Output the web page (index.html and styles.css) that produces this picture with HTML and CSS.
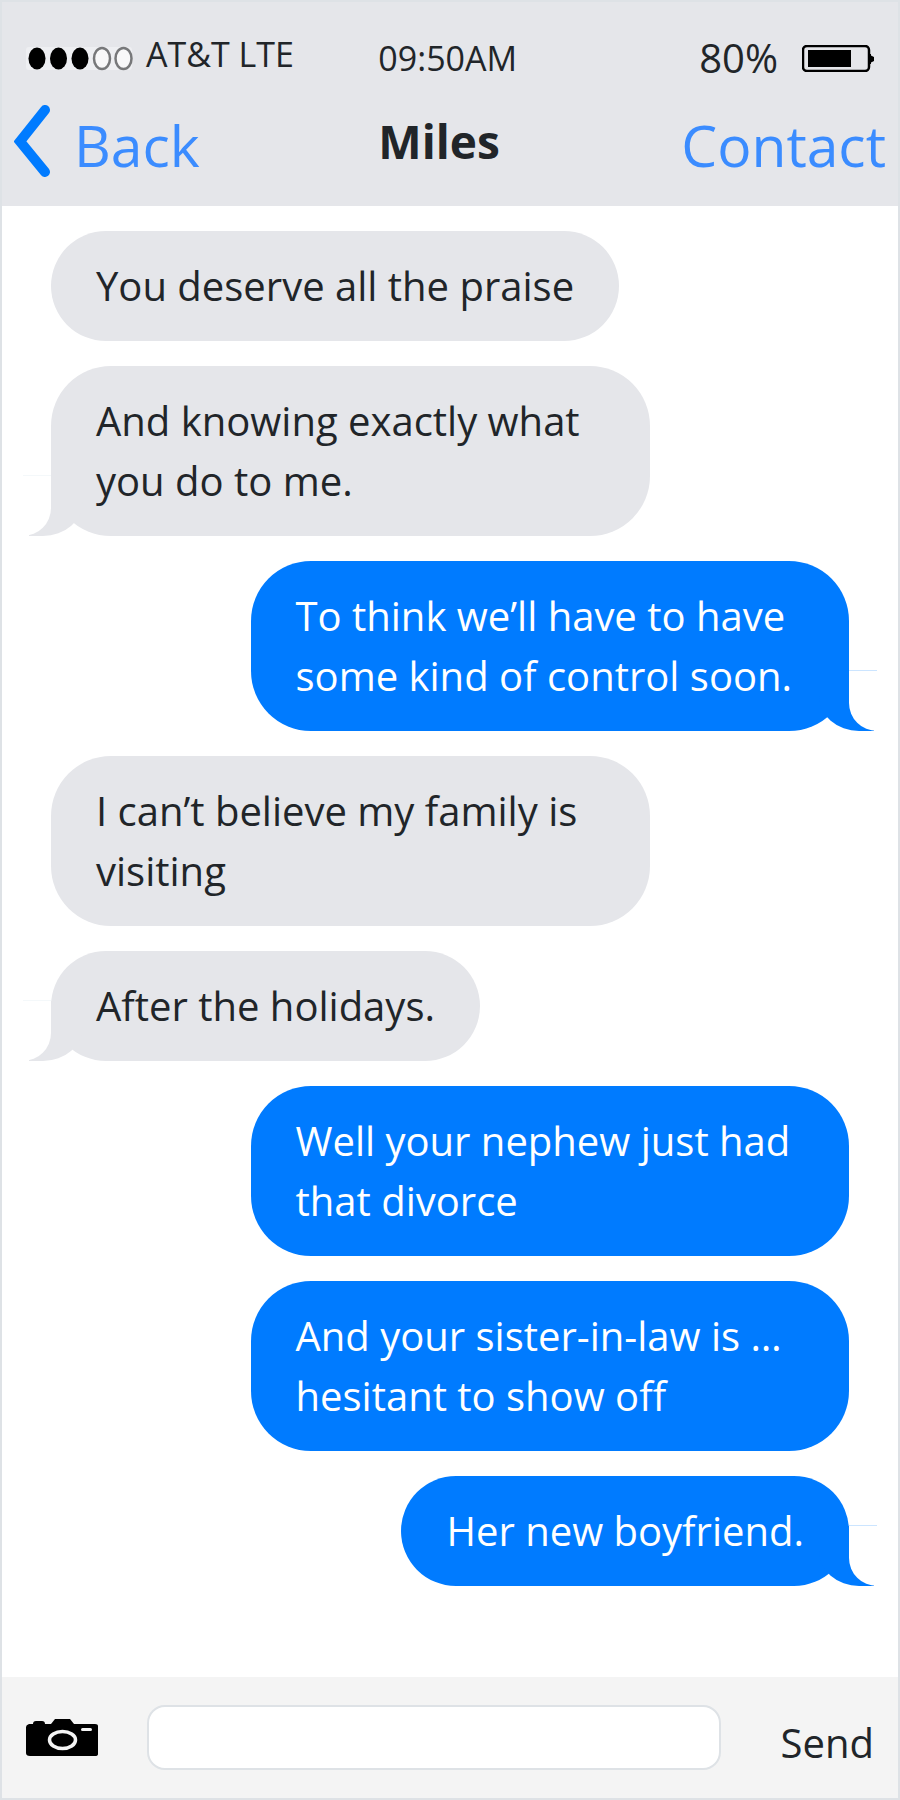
FILE: index.html
```html
<!DOCTYPE html>
<html lang="en">
<head>
  <meta charset="UTF-8">
  <meta name="viewport" content="width=device-width, initial-scale=1.0">
  <title>Messages</title>
  <link rel="stylesheet" href="styles.css">
</head>
<body>
  <div class="phone">
    <header class="header">
      <div class="status-bar">
        <div class="carrier">
          <svg class="signal" viewBox="0 0 108 25" aria-hidden="true">
            <rect x="0" y="1" width="106" height="23" rx="3" fill="#eeeff2"/>
            <ellipse cx="11" cy="12.5" rx="8.5" ry="11"/>
            <ellipse cx="32.5" cy="12.5" rx="8.5" ry="11"/>
            <ellipse cx="54" cy="12.5" rx="8.5" ry="11"/>
            <ellipse cx="76" cy="12.5" rx="8" ry="10.5" fill="#f8f8f9" stroke="#77787a" stroke-width="2.5"/>
            <ellipse cx="97.5" cy="12.5" rx="8" ry="10.5" fill="#f8f8f9" stroke="#77787a" stroke-width="2.5"/>
          </svg>
          <span class="network">AT&amp;T LTE</span>
        </div>
        <div class="time">09:50AM</div>
        <div class="power">
          <span>80%</span>
          <svg class="battery" viewBox="0 0 72 27" aria-hidden="true">
            <rect x="1" y="1" width="66" height="25" rx="4" fill="none" stroke="#000" stroke-width="2.5"/>
            <rect x="6" y="5" width="43" height="17"/>
            <path d="M67 9h2v1.500l3 1.500v4l-3 1.500v1.500h-2z"/>
          </svg>
        </div>
      </div>
      <nav class="nav-bar">
        <a class="back" href="#">
          <svg class="chevron" viewBox="0 0 36 72" aria-hidden="true">
            <path d="M31 5L6 36.500L31 67" fill="none" stroke="#007bff" stroke-width="10" stroke-linecap="round"/>
          </svg>
          <span class="nav-label">Back</span>
        </a>
        <h1 class="name">Miles</h1>
        <a class="contact nav-label" href="#">Contact</a>
      </nav>
    </header>

    <main class="messages">
      <p class="bubble received">You deserve all the praise</p>
      <p class="bubble received last">And knowing exactly what you do to me.</p>
      <p class="bubble sent last">To think we’ll have to have some kind of control soon.</p>
      <p class="bubble received">I can’t believe my family is visiting</p>
      <p class="bubble received last">After the holidays.</p>
      <p class="bubble sent">Well your nephew just had that divorce</p>
      <p class="bubble sent">And your sister-in-law is … hesitant to show off</p>
      <p class="bubble sent last">Her new boyfriend.</p>
    </main>

    <form class="compose">
      <button class="camera-btn" type="button" aria-label="Camera">
        <svg class="camera" viewBox="0 0 72 37" aria-hidden="true">
          <path d="M3 5h4q0-3 3-3h6q3 0 3 3h6l4-5h15l4 5h21q3 0 3 2v28q0 2-3 2H4q-4 0-4-3V8q0-2 3-3z"/>
          <ellipse cx="36.500" cy="21" rx="13" ry="8.500" fill="none" stroke="#f4f4f4" stroke-width="3.500"/>
          <rect x="55" y="9" width="11" height="3" rx="1.500" fill="#f4f4f4"/>
        </svg>
      </button>
      <input class="message-input" type="text" aria-label="Message">
      <button class="send-btn" type="button">Send</button>
    </form>
  </div>
</body>
</html>
```
FILE: styles.css
```css
* {
  box-sizing: border-box;
}
body {
  margin: 0;
  font-family: "Open Sans", "Noto Sans", sans-serif;
  font-size: 40px;
  line-height: 60px;
  color: #212529;
  background-color: #fff;
}
.phone {
  display: flex;
  flex-direction: column;
  min-height: 100vh;
  border: 2px solid #dee2e6;
}

/* header */
.header {
  padding: 22px 0 8px;
  background-color: #e5e6ea;
}
.status-bar,
.nav-bar {
  display: grid;
  grid-template-columns: 42% 1fr auto;
  align-items: center;
}
.status-bar {
  height: 60px;
  font-size: 34px;
}
.nav-bar {
  height: 114px;
}
.carrier {
  display: flex;
  align-items: center;
  gap: 12px;
  padding-left: 24px;
}
.signal {
  width: 108px;
  height: 25px;
}
.network {
  padding-bottom: 8px;
}
.power {
  display: flex;
  align-items: center;
  gap: 24px;
  padding-right: 24px;
  font-size: 40px;
}
.battery {
  width: 72px;
  height: 27px;
}
.back {
  display: flex;
  align-items: center;
  gap: 24px;
  padding-left: 12px;
}
.back,
.contact {
  color: #3b8cff;
  font-size: 57px;
  text-decoration: none;
}
.contact {
  padding-right: 12px;
}
.nav-label {
  padding-top: 8px;
}
.chevron {
  width: 36px;
  height: 72px;
}
.name {
  margin: 0;
  font-size: 46px;
  font-weight: 700;
}

/* messages */
.messages {
  flex: 1;
  display: flex;
  flex-direction: column;
  align-items: flex-start;
  gap: 25px;
  padding: 25px 49px;
}
.bubble {
  position: relative;
  max-width: 75%;
  margin: 0;
  padding: 25px 45px;
  border-radius: 60px;
}
.received {
  background-color: #e5e6ea;
}
.sent {
  align-self: flex-end;
  color: #fff;
  background-color: #007bff;
}
.last::before,
.last::after {
  content: "";
  position: absolute;
  bottom: 0;
  height: 60px;
}
.last::after {
  background-color: #fff;
}
.received.last::before {
  left: -22px;
  width: 54px;
  background-color: #e5e6ea;
  border-bottom-right-radius: 40px 35px;
}
.received.last::after {
  left: -28px;
  width: 28px;
  border-top: 1px solid #f4f8fa;
  border-bottom-right-radius: 28px 28px;
}
.sent.last::before {
  right: -25px;
  width: 55px;
  background-color: #007bff;
  border-bottom-left-radius: 40px 35px;
}
.sent.last::after {
  right: -28px;
  width: 28px;
  border-top: 1px solid #cce5ff;
  border-bottom-left-radius: 28px 28px;
}

/* compose bar */
.compose {
  display: flex;
  align-items: center;
  padding: 28px 24px;
  background-color: #f4f4f4;
}
.camera-btn,
.send-btn {
  padding: 0;
  border: none;
  background: none;
  color: inherit;
  font: inherit;
  cursor: pointer;
}
.camera-btn {
  display: flex;
}
.camera {
  width: 72px;
  height: 37px;
}
.send-btn {
  height: 65px;
  padding-top: 8px;
}
.message-input {
  flex: 1;
  min-width: 0;
  height: 65px;
  margin: 0 60px 0 49px;
  padding: 0 16px;
  border: 2px solid #dee2e6;
  border-radius: 18px;
  background-color: #fff;
  font: inherit;
}
```
